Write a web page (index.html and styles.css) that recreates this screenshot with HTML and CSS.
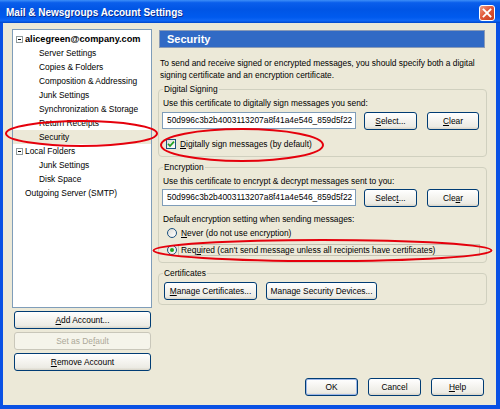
FILE: index.html
```html
<!DOCTYPE html>
<html lang="en">
<head>
    <meta charset="UTF-8">
    <title>Mail &amp; Newsgroups Account Settings</title>
    <link rel="stylesheet" href="styles.css">
</head>
<body>

<div class="window">
    <div class="titlebar">
        <span class="title">Mail &amp; Newsgroups Account Settings</span>
        <span class="close">
            <svg width="16" height="16" viewBox="0 0 16 16">
                <defs>
                    <linearGradient id="cg" x1="0" y1="0" x2="1" y2="1">
                        <stop offset="0" stop-color="#F0A48C"/>
                        <stop offset="0.45" stop-color="#E1593A"/>
                        <stop offset="1" stop-color="#C3391B"/>
                    </linearGradient>
                </defs>
                <rect x="0.5" y="0.5" width="15" height="15" rx="2.5" fill="url(#cg)" stroke="#fff"/>
                <path d="M4.5 4.5 L11.5 11.5 M11.5 4.5 L4.5 11.5" stroke="#fff" stroke-width="1.8" stroke-linecap="square"/>
            </svg>
        </span>
    </div>

    <div class="frame">
        <div class="sidebar">
            <div class="tree">
                <div class="row account"><span class="twisty"></span><b>alicegreen@company.com</b></div>
                <div class="row child">Server Settings</div>
                <div class="row child">Copies &amp; Folders</div>
                <div class="row child">Composition &amp; Addressing</div>
                <div class="row child">Junk Settings</div>
                <div class="row child">Synchronization &amp; Storage</div>
                <div class="row child">Return Receipts</div>
                <div class="row child selected">Security</div>
                <div class="row account"><span class="twisty"></span>Local Folders</div>
                <div class="row child">Junk Settings</div>
                <div class="row child">Disk Space</div>
                <div class="row top">Outgoing Server (SMTP)</div>
            </div>
            <button class="btn side-btn"><u>A</u>dd Account...</button>
            <button class="btn side-btn" disabled>Set as De<u>f</u>ault</button>
            <button class="btn side-btn"><u>R</u>emove Account</button>
        </div>

        <div class="main">
            <div class="header">Security</div>
            <p class="desc">To send and receive signed or encrypted messages, you should specify both a digital signing certificate and an encryption certificate.</p>

            <fieldset class="group">
                <legend>Digital Signing</legend>
                <div class="line">Use this certificate to digitally sign messages you send:</div>
                <div class="cert-row">
                    <div class="field">50d996c3b2b4003113207a8f41a4e546_859d5f22</div>
                    <button class="btn cert-btn"><u>S</u>elect...</button>
                    <button class="btn cert-btn"><u>C</u>lear</button>
                </div>
                <div class="check-row">
                    <span class="checkbox">
                        <svg width="8" height="8" viewBox="0 0 8 8"><path d="M1 3.8 L3 6 L7 1.6" fill="none" stroke="#21A121" stroke-width="1.7"/></svg>
                    </span>
                    <span><u>D</u>igitally sign messages (by default)</span>
                </div>
            </fieldset>

            <fieldset class="group enc">
                <legend>Encryption</legend>
                <div class="line">Use this certificate to encrypt &amp; decrypt messages sent to you:</div>
                <div class="cert-row">
                    <div class="field">50d996c3b2b4003113207a8f41a4e546_859d5f22</div>
                    <button class="btn cert-btn">Selec<u>t</u>...</button>
                    <button class="btn cert-btn">Cle<u>a</u>r</button>
                </div>
                <div class="line default-line">Default encryption setting when sending messages:</div>
                <div class="radio-row">
                    <span class="radio"></span>
                    <span class="radio-label"><u>N</u>ever (do not use encryption)</span>
                </div>
                <div class="radio-row required">
                    <span class="radio checked"></span>
                    <span class="radio-label focused">Req<u>u</u>ired (can't send message unless all recipients have certificates)</span>
                </div>
            </fieldset>

            <fieldset class="group certs">
                <legend>Certificates</legend>
                <div class="manage-row">
                    <button class="btn manage-certs"><u>M</u>anage Certificates...</button>
                    <button class="btn manage-devices">Manage Security Devices...</button>
                </div>
            </fieldset>

            <div class="footer">
                <button class="btn dlg-btn default">OK</button>
                <button class="btn dlg-btn">Cancel</button>
                <button class="btn dlg-btn"><u>H</u>elp</button>
            </div>
        </div>
    </div>

    <!-- red marks drawn over the screenshot -->
    <svg class="marks" width="500" height="409">
        <ellipse cx="81.5" cy="133.5" rx="75.5" ry="12.5"/>
        <ellipse cx="242" cy="145" rx="81" ry="16"/>
        <ellipse cx="322.5" cy="250.5" rx="169" ry="10.5"/>
    </svg>
</div>

</body>
</html>
```

FILE: styles.css
```css
* {
    box-sizing: border-box;
}
body {
    margin: 0;
    font-family: "Liberation Sans", Arial, sans-serif;
    font-size: 8.4px;
    color: #000;
    background: #fff;
}
.window {
    width: 500px;
    height: 409px;
    position: relative;
    display: flex;
    flex-direction: column;
    overflow: hidden;
}

/* title bar */
.titlebar {
    height: 23px;
    flex: none;
    display: flex;
    align-items: center;
    justify-content: space-between;
    padding: 0 5px 0 6px;
    background: linear-gradient(#3D8EF8 0%, #0A5EEB 12%, #0055E5 40%, #005AEE 75%, #0F66F5 90%, #0047C9 100%);
}
.title {
    color: #fff;
    font-weight: bold;
    font-size: 10px;
    text-shadow: 1px 1px 0 #0A2A8C;
    padding-top: 2px;
}
.close {
    display: flex;
    margin-top: 3px;
}

/* window body */
.frame {
    flex: 1;
    display: flex;
    gap: 6px;
    padding: 6px 9px 0 9px;
    background: #ECE9D8;
    border: solid #0A51E4;
    border-width: 0 4px 4px 3px;
}
.sidebar {
    width: 140px;
    flex: none;
    display: flex;
    flex-direction: column;
}
.tree {
    height: 279px;
    background: #fff;
    border: 1px solid #7F9DB9;
    padding-top: 2px;
}
.row {
    height: 14px;
    line-height: 14px;
    white-space: nowrap;
    display: flex;
    align-items: center;
}
.row.account {
    padding-left: 3px;
}
.row.account b {
    font-size: 9.2px;
}
.row.child {
    padding-left: 26px;
}
.row.top {
    padding-left: 12px;
}
.row.selected {
    background: #ECE9D8;
}
.twisty {
    width: 7px;
    height: 7px;
    border: 1px solid #919B9C;
    margin-right: 2px;
    position: relative;
    background: #fff;
}
.twisty::after {
    content: "";
    position: absolute;
    left: 1px;
    right: 1px;
    top: 2px;
    height: 1px;
    background: #000;
}

/* xp style buttons */
.btn {
    font-family: inherit;
    font-size: 8.4px;
    color: #000;
    height: 18px;
    padding: 0;
    border: 1px solid #003C74;
    border-radius: 3px;
    background: linear-gradient(#FFFFFF, #F5F4F0 45%, #ECEBE4 85%, #D8D4C8);
    white-space: nowrap;
}
.btn:disabled {
    border-color: #C9C7BA;
    background: #F5F4EA;
    color: #ACA899;
}
.side-btn {
    margin: 3px 1px 0 2px;
}
.dlg-btn.default {
    box-shadow: inset 0 0 0 1px #9DB7E8;
}

/* right side */
.main {
    flex: 1;
    display: flex;
    flex-direction: column;
}
.header {
    margin: 1px 2px 0 1px;
    height: 18px;
    line-height: 16px;
    padding-left: 7px;
    background: #316AC5;
    border: 1px solid #8A9BB6;
    color: #fff;
    font-weight: bold;
    font-size: 11px;
}
.desc {
    margin: 9px 0 0 2px;
    line-height: 12px;
}
.group {
    margin: 3px 0 0;
    padding: 0 4px 6px 3px;
    border: 1px solid #D0D0BF;
    border-radius: 4px;
}
.group legend {
    padding: 0 1px;
    margin-left: 1px;
    line-height: 11px;
}
.group.enc {
    margin-top: 5px;
}
.group.certs {
    margin-top: 5px;
    padding-bottom: 4px;
}
.line {
    line-height: 12px;
    margin-top: 2px;
    padding-left: 1px;
}
.cert-row {
    display: flex;
    margin-top: 3px;
}
.enc .cert-row {
    margin-top: 2px;
}
.field {
    width: 194px;
    height: 17px;
    line-height: 15px;
    padding-left: 4px;
    border: 1px solid #7F9DB9;
    background: #fff;
    overflow: hidden;
    white-space: nowrap;
}
.cert-btn {
    width: 53px;
    margin-left: 8px;
}
.cert-btn + .cert-btn {
    width: 52px;
    margin-left: 10px;
}
.check-row {
    display: flex;
    align-items: center;
    height: 12px;
    margin-top: 8px;
    padding-left: 4px;
    gap: 4px;
}
.checkbox {
    width: 10px;
    height: 10px;
    border: 1px solid #1C5180;
    background: linear-gradient(135deg, #DCDCD7, #FFFFFF);
    display: flex;
    align-items: center;
    justify-content: center;
}
.default-line {
    margin-top: 6px;
}
.radio-row {
    display: flex;
    align-items: center;
    height: 12px;
    margin-top: 2px;
    padding-left: 5px;
}
.radio-row.required {
    margin-top: 5px;
}
.radio {
    width: 10px;
    height: 10px;
    border-radius: 50%;
    border: 1px solid #1C5180;
    background: linear-gradient(135deg, #DCDCD7, #FFFFFF);
    display: flex;
    align-items: center;
    justify-content: center;
}
.radio.checked::after {
    content: "";
    width: 4px;
    height: 4px;
    border-radius: 50%;
    background: #21A121;
}
.radio-label {
    margin-left: 1px;
    padding: 0 2px;
    line-height: 10px;
    border: 1px solid transparent;
}
.radio-label.focused {
    flex: 1;
    margin-right: 2px;
    border-color: #C5C2B2;
}
.manage-row {
    display: flex;
    margin-top: 3px;
    padding-left: 2px;
    gap: 9px;
}
.manage-certs {
    width: 93px;
}
.manage-devices {
    width: 111px;
}
.footer {
    margin-top: auto;
    display: flex;
    justify-content: flex-end;
    gap: 10px;
    padding: 0 3px 9px 0;
}
.dlg-btn {
    width: 53px;
}

/* annotation overlay */
.marks {
    position: absolute;
    left: 0;
    top: 0;
    pointer-events: none;
}
.marks ellipse {
    fill: none;
    stroke: #E5000C;
    stroke-width: 2;
}
```
